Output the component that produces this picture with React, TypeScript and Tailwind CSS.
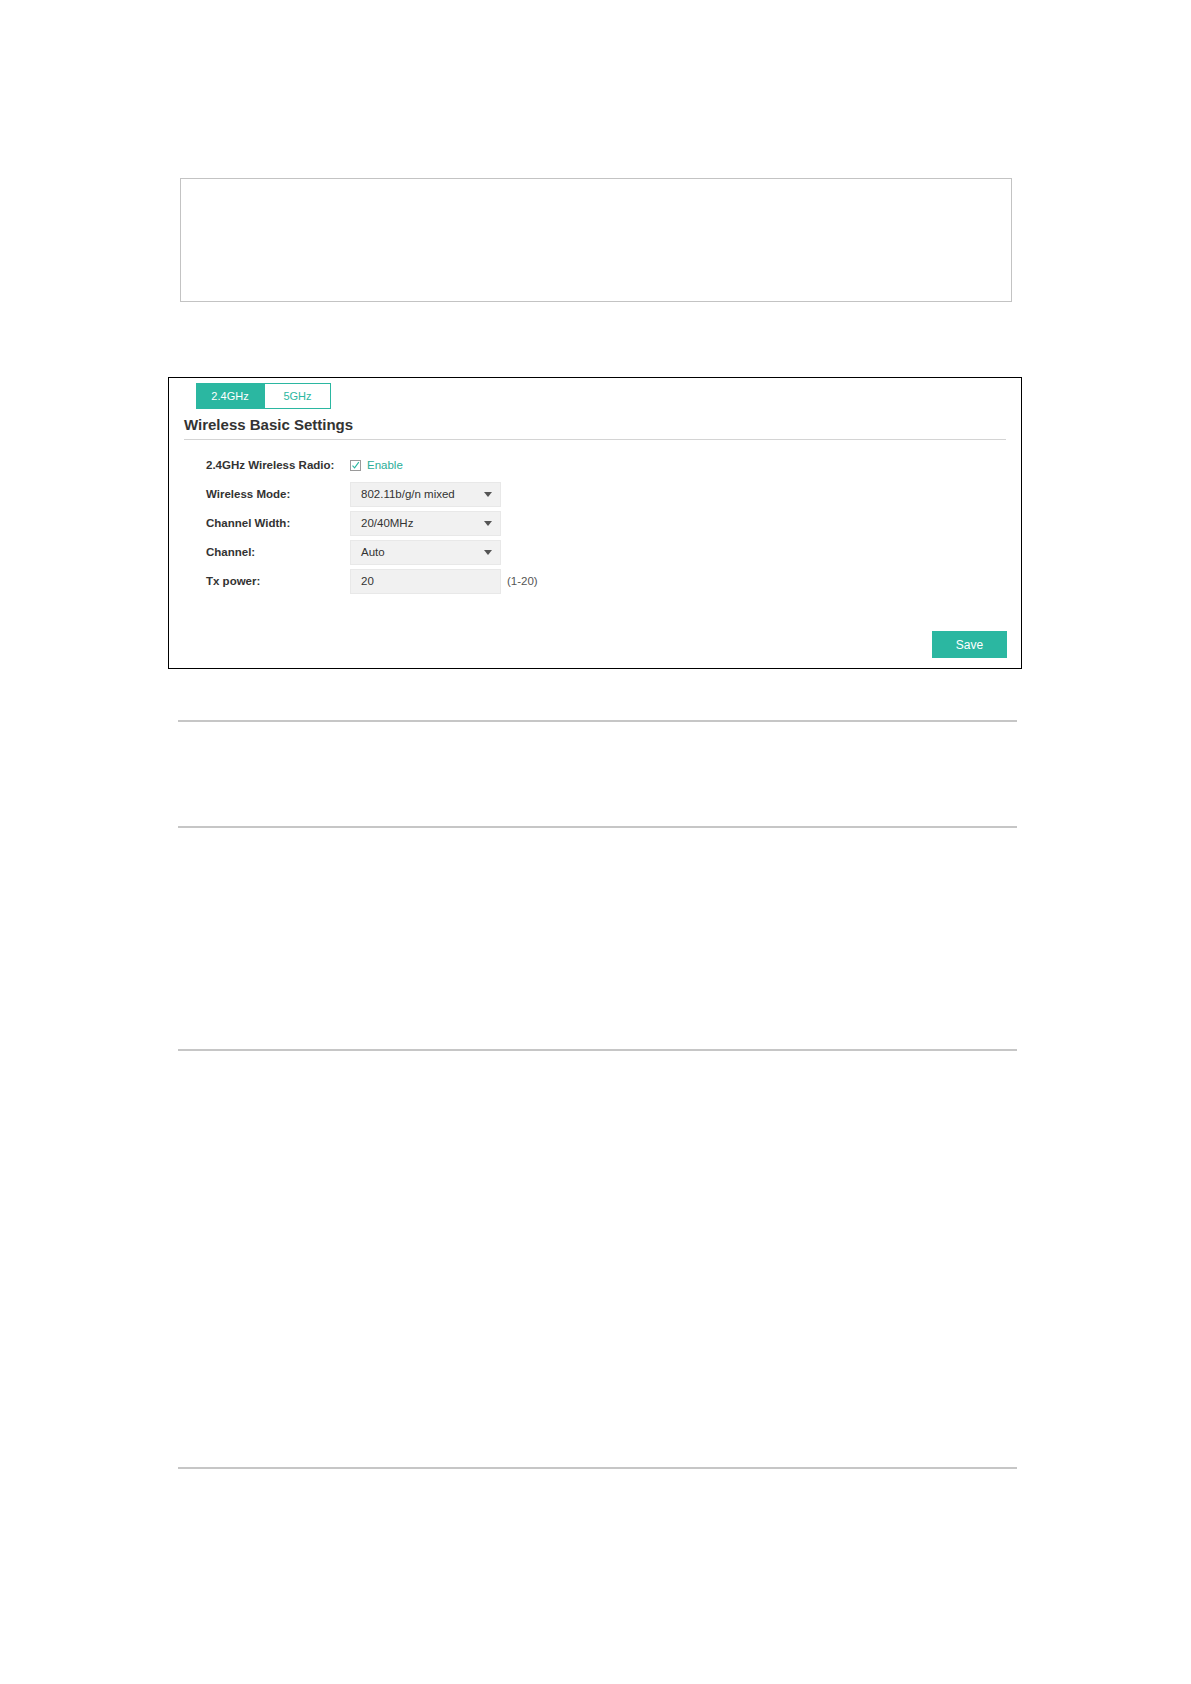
import React from "react";

const TEAL = "#2bb7a1";

type Row =
  | { label: string; kind: "check"; value: string }
  | { label: string; kind: "select"; value: string }
  | { label: string; kind: "input"; value: string; hint: string };

const rows: Row[] = [
  { label: "2.4GHz Wireless Radio:", kind: "check", value: "Enable" },
  { label: "Wireless Mode:", kind: "select", value: "802.11b/g/n mixed" },
  { label: "Channel Width:", kind: "select", value: "20/40MHz" },
  { label: "Channel:", kind: "select", value: "Auto" },
  { label: "Tx power:", kind: "input", value: "20", hint: "(1-20)" },
];

const CheckBox = () => (
  <span className="flex h-[11px] w-[11px] items-center justify-center border border-[#9a9a9a] bg-white">
    <svg width="9" height="9" viewBox="0 0 9 9" fill="none">
      <path d="M1.5 4.6 L3.6 6.8 L7.8 1.2" stroke={TEAL} strokeWidth="1.1" />
    </svg>
  </span>
);

const Field = ({ row }: { row: Row }) => {
  if (row.kind === "check")
    return (
      <div className="flex items-center gap-[6px]">
        <CheckBox />
        <span className="text-[11.5px] text-[#2bae98]">{row.value}</span>
      </div>
    );

  return (
    <div className="flex items-center">
      <div className="flex h-[25px] w-[151px] items-center justify-between border border-[#e8e8e8] bg-[#f1f1f1] pl-[10px] pr-[8px] text-[11.5px] text-[#333]">
        <span>{row.value}</span>
        {row.kind === "select" && (
          <svg width="8" height="5" viewBox="0 0 8 5">
            <path d="M0 0 H8 L4 5 Z" fill="#555" />
          </svg>
        )}
      </div>
      {row.kind === "input" && (
        <span className="ml-[6px] text-[11.5px] text-[#555]">{row.hint}</span>
      )}
    </div>
  );
};

const Divider = ({ mt }: { mt: string }) => (
  <div className={`${mt} ml-[178px] h-[2px] w-[839px] bg-[#c6c6c6]`} />
);

const App = () => {
  return (
    <div className="min-h-[1684px] w-[1191px] bg-white font-['Liberation_Sans',Arial,sans-serif]">
      <div className="pt-[178px]">
        <div className="ml-[180px] h-[124px] w-[832px] border border-[#c3c3c3]" />

        <section className="ml-[168px] mt-[75px] flex h-[292px] w-[854px] flex-col border border-black">
          <div className="ml-[27px] mt-[5px] flex h-[26px] text-[11px]">
            <button
              className="flex w-[68px] items-center justify-center text-white"
              style={{ backgroundColor: TEAL }}
            >
              2.4GHz
            </button>
            <button
              className="flex w-[67px] items-center justify-center border bg-white"
              style={{ borderColor: TEAL, color: TEAL }}
            >
              5GHz
            </button>
          </div>

          <h2 className="mx-[15px] mt-[7px] border-b border-[#d4d4d4] pb-[5px] text-[15px] font-bold leading-[18px] text-[#333]">
            Wireless Basic Settings
          </h2>

          <div className="ml-[37px] mt-[13px] flex flex-col gap-[4px]">
            {rows.map((row) => (
              <div key={row.label} className="flex h-[25px] items-center">
                <span className="w-[144px] text-[11.5px] font-bold text-[#333]">
                  {row.label}
                </span>
                <Field row={row} />
              </div>
            ))}
          </div>

          <button
            className="mt-auto mb-[10px] mr-[14px] h-[27px] w-[75px] self-end text-[12px] text-white"
            style={{ backgroundColor: TEAL }}
          >
            Save
          </button>
        </section>

        <Divider mt="mt-[51px]" />
        <Divider mt="mt-[104px]" />
        <Divider mt="mt-[221px]" />
        <Divider mt="mt-[416px]" />
      </div>
    </div>
  );
};

export default App;
